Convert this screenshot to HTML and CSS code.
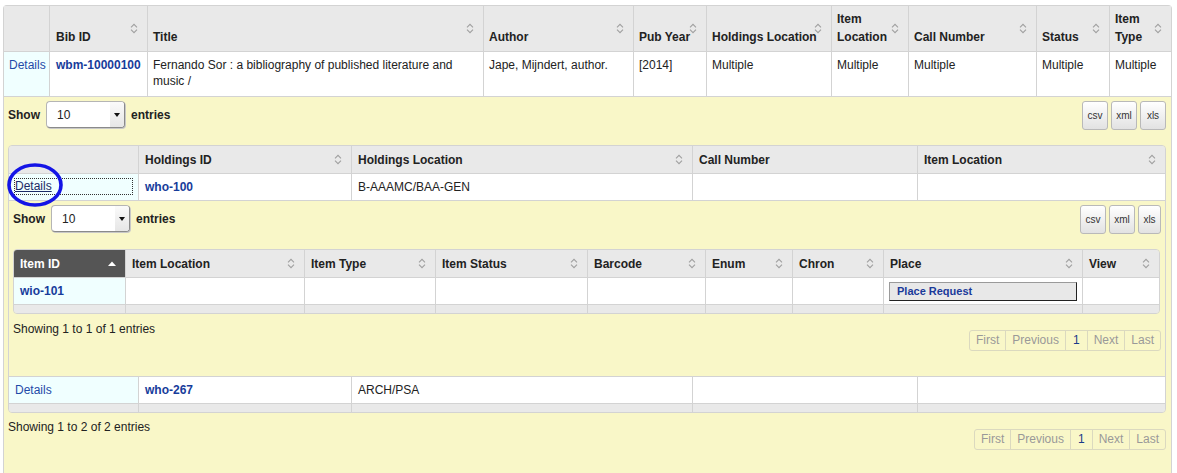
FILE: index.html
```html
<!DOCTYPE html>
<html>
<head>
<meta charset="utf-8">
<title>Bib search results</title>
<link rel="stylesheet" href="styles.css">
</head>
<body>
<div class="page">
  <table class="grid outer">
    <colgroup>
      <col style="width:45px"><col style="width:98px"><col style="width:336px"><col style="width:150px"><col style="width:73px"><col style="width:125px"><col style="width:77px"><col style="width:128px"><col style="width:73px"><col style="width:62px">
    </colgroup>
    <thead>
      <tr>
        <th class="plain"></th>
        <th class="sortable">Bib ID</th>
        <th class="sortable">Title</th>
        <th class="sortable">Author</th>
        <th class="sortable">Pub Year</th>
        <th class="sortable">Holdings Location</th>
        <th class="sortable">Item<br>Location</th>
        <th class="sortable">Call Number</th>
        <th class="sortable">Status</th>
        <th class="sortable">Item<br>Type</th>
      </tr>
    </thead>
    <tbody>
      <tr class="datarow">
        <td class="detail"><span class="link">Details</span></td>
        <td class="bibid"><span class="idlink">wbm-10000100</span></td>
        <td>Fernando Sor : a bibliography of published literature and music /</td>
        <td>Jape, Mijndert, author.</td>
        <td>[2014]</td>
        <td>Multiple</td>
        <td>Multiple</td>
        <td>Multiple</td>
        <td>Multiple</td>
        <td>Multiple</td>
      </tr>
      <tr>
        <td colspan="10" class="expand expand-outer">
          <div class="toolbar">
            <div class="length"><b>Show</b><span class="select"><span class="val">10</span><span class="arrow"></span></span><b>entries</b></div>
            <div class="exports"><span class="btn">csv</span><span class="btn">xml</span><span class="btn">xls</span></div>
          </div>

          <table class="grid inner holdings">
            <colgroup>
              <col style="width:129px"><col style="width:213px"><col style="width:341px"><col style="width:225px"><col style="width:248px">
            </colgroup>
            <thead>
              <tr>
                <th class="plain"></th>
                <th class="sortable">Holdings ID</th>
                <th class="sortable">Holdings Location</th>
                <th>Call Number</th>
                <th class="sortable">Item Location</th>
              </tr>
            </thead>
            <tbody>
              <tr class="row">
                <td class="detail"><span class="focuslink">Details</span></td>
                <td><span class="idlink">who-100</span></td>
                <td>B-AAAMC/BAA-GEN</td>
                <td></td>
                <td></td>
              </tr>
              <tr>
                <td colspan="5" class="expand expand-inner">
                  <div class="toolbar">
                    <div class="length"><b>Show</b><span class="select"><span class="val">10</span><span class="arrow"></span></span><b>entries</b></div>
                    <div class="exports"><span class="btn">csv</span><span class="btn">xml</span><span class="btn">xls</span></div>
                  </div>

                  <table class="grid inner items">
                    <colgroup>
                      <col style="width:111px"><col style="width:179px"><col style="width:131px"><col style="width:152px"><col style="width:118px"><col style="width:87px"><col style="width:91px"><col style="width:199px"><col style="width:77px">
                    </colgroup>
                    <thead>
                      <tr>
                        <th class="sorted">Item ID</th>
                        <th class="sortable">Item Location</th>
                        <th class="sortable">Item Type</th>
                        <th class="sortable">Item Status</th>
                        <th class="sortable">Barcode</th>
                        <th class="sortable">Enum</th>
                        <th class="sortable">Chron</th>
                        <th class="sortable">Place</th>
                        <th class="sortable">View</th>
                      </tr>
                    </thead>
                    <tbody>
                      <tr class="row">
                        <td class="detail"><span class="idlink">wio-101</span></td>
                        <td></td><td></td><td></td><td></td><td></td><td></td>
                        <td><span class="placebtn">Place Request</span></td>
                        <td></td>
                      </tr>
                    </tbody>
                    <tfoot>
                      <tr><td></td><td></td><td></td><td></td><td></td><td></td><td></td><td></td><td></td></tr>
                    </tfoot>
                  </table>

                  <div class="footer">
                    <div class="info">Showing 1 to 1 of 1 entries</div>
                    <div class="pager"><span class="pg dis">First</span><span class="pg dis">Previous</span><span class="pg cur">1</span><span class="pg dis">Next</span><span class="pg dis">Last</span></div>
                  </div>
                </td>
              </tr>
              <tr class="row">
                <td class="detail"><span class="link">Details</span></td>
                <td><span class="idlink">who-267</span></td>
                <td>ARCH/PSA</td>
                <td></td>
                <td></td>
              </tr>
            </tbody>
            <tfoot>
              <tr><td></td><td></td><td></td><td></td><td></td></tr>
            </tfoot>
          </table>

          <div class="footer footer-outer">
            <div class="info">Showing 1 to 2 of 2 entries</div>
            <div class="pager"><span class="pg dis">First</span><span class="pg dis">Previous</span><span class="pg cur">1</span><span class="pg dis">Next</span><span class="pg dis">Last</span></div>
          </div>
        </td>
      </tr>
    </tbody>
  </table>

  <svg class="annot" width="64" height="52" viewBox="0 0 64 52" aria-hidden="true">
    <ellipse cx="32" cy="24" rx="26" ry="20" fill="none" stroke="#1414e6" stroke-width="3.6"/>
  </svg>
</div>
</body>
</html>
```

FILE: styles.css
```css
* { box-sizing: border-box; }

body {
  margin: 0;
  background: #ffffff;
  font-family: "Liberation Sans", Arial, Helvetica, sans-serif;
  font-size: 12px;
  color: #222222;
}

.page {
  position: relative;
  padding: 5px 0 0 3px;
  width: 1177px;
}

table.grid {
  border-collapse: separate;
  border-spacing: 0;
  table-layout: fixed;
  border: 1px solid #d3d3d3;
  border-radius: 4px;
}

table.outer { width: 1167px; border-bottom: none; border-radius: 4px 4px 0 0; }

.grid th {
  background: #e9e9e9;
  font-weight: bold;
  text-align: left;
  color: #222;
  border-left: 1px solid #d3d3d3;
  border-bottom: 1px solid #d3d3d3;
  background-repeat: no-repeat;
  background-position: right 9px center;
}
.grid th:first-child { border-left: none; }

.grid td {
  border-left: 1px solid #d3d3d3;
  border-bottom: 1px solid #d3d3d3;
  vertical-align: top;
  background: #ffffff;
}
.grid td:first-child { border-left: none; }

th.sortable {
  background-image: url("data:image/svg+xml;utf8,<svg xmlns='http://www.w3.org/2000/svg' width='8' height='11'><path d='M1 4.3L4 1.3L7 4.3M1 6.7L4 9.7L7 6.7' fill='none' stroke='%23a0a0a0' stroke-width='1.1'/></svg>");
}

th.sorted {
  background-color: #555555;
  color: #ffffff;
  background-image: url("data:image/svg+xml;utf8,<svg xmlns='http://www.w3.org/2000/svg' width='8' height='5'><path d='M0 5L4 0.5L8 5Z' fill='white'/></svg>");
  background-position: right 9px center;
  border-top-left-radius: 3px;
}

/* outer table */
.outer th {
  height: 46px;
  vertical-align: bottom;
  line-height: 18px;
  padding: 3px 4px 5px 5px;
  white-space: nowrap;
  overflow: visible;
}
.outer th.sortable:nth-child(2) { padding-left: 6px; }
.outer .datarow td {
  height: 45px;
  line-height: 16px;
  padding: 5px 5px 7px 5px;
}
.outer .datarow td.bibid { padding-left: 6px; }

td.detail { background: #f0ffff; }

.link { color: #1f4aa8; }
.idlink { color: #173c9b; font-weight: bold; }

/* expanded rows */
.grid td.expand {
  background: #f9f7c8;
  border-left: none;
}
.expand-outer {
  padding: 4px 5px 26px 4px;
  border-bottom: none !important;
}
.expand-inner {
  padding: 4px 4px 25px 4px;
}

.toolbar {
  display: flex;
  justify-content: space-between;
  align-items: flex-start;
  height: 44px;
}
.length {
  display: flex;
  align-items: center;
  gap: 6px;
  height: 27px;
}
.select {
  display: flex;
  align-items: center;
  justify-content: space-between;
  width: 79px;
  height: 27px;
  background: #ffffff;
  border: 1px solid #b5b5b5;
  border-right-color: #8a8a8a;
  border-bottom-color: #8a8a8a;
  border-radius: 4px;
  box-shadow: 1px 1px 0 #c8c8c8;
  padding-left: 10px;
  font-weight: normal;
  color: #222;
}
.select .arrow {
  width: 14px;
  height: 100%;
  display: flex;
  align-items: center;
  justify-content: center;
  background: linear-gradient(#fafafa, #e6e6e6);
  border-radius: 0 3px 3px 0;
}
.select .arrow::after {
  content: "";
  border-left: 3px solid transparent;
  border-right: 3px solid transparent;
  border-top: 4px solid #111;
}

.exports { display: flex; gap: 3px; }
.btn {
  display: flex;
  align-items: center;
  justify-content: center;
  width: 26px;
  height: 29px;
  border: 1px solid #b9b9b9;
  border-radius: 3px;
  background: linear-gradient(#ffffff, #e2e2e2);
  font-size: 10px;
  color: #333;
}
.expand-inner .exports .btn:last-child { width: 23px; }

/* inner tables */
table.holdings { width: 1156px; }
table.items { width: 1145px; }

.inner th {
  height: 28px;
  line-height: 16px;
  padding: 0 20px 0 6px;
  vertical-align: middle;
}
.inner th:first-child { border-top-left-radius: 3px; }
.inner th:last-child { border-top-right-radius: 3px; }

.inner tr.row td {
  height: 27px;
  padding: 5px 6px 0 6px;
  line-height: 16px;
}

.inner tfoot td {
  height: 8px;
  padding: 0;
  background: #e9e9e9;
  border-bottom: none;
}
.inner tfoot td:first-child { border-bottom-left-radius: 3px; }
.inner tfoot td:last-child { border-bottom-right-radius: 3px; }

.focuslink {
  display: block;
  color: #1b2a66;
  text-decoration: underline;
  outline: 1px dotted #333;
  line-height: 15px;
}

.items tr.row td { padding-top: 5px; }
.items tr.row td.detail { padding-left: 6px; }

.placebtn {
  display: block;
  margin: -1px -1px 0 -1px;
  height: 19px;
  line-height: 17px;
  padding-left: 7px;
  background: #e8e8e8;
  border: 1px solid #9a9a9a;
  border-right-color: #222;
  border-bottom-color: #222;
  color: #1a3a9a;
  font-weight: bold;
  font-size: 11px;
}

/* footers */
.footer {
  display: flex;
  justify-content: space-between;
  align-items: flex-start;
  margin-top: 7px;
}
.footer .info { line-height: 16px; }
.footer .pager { margin-top: 9px; }
.footer-outer { margin-top: 6px; }
.footer-outer .pager { margin-top: 10px; }

.pager {
  display: flex;
  border: 1px solid #dbd9bf;
  border-radius: 3px;
  height: 21px;
}
.pg {
  padding: 0 6px;
  line-height: 19px;
  border-left: 1px solid #dbd9bf;
  color: #999999;
}
.pg:first-child { border-left: none; }
.pg.cur { color: #1a3a8a; padding: 0 7px; }

/* annotation overlay */
.annot {
  position: absolute;
  left: 3px;
  top: 161px;
}
```
